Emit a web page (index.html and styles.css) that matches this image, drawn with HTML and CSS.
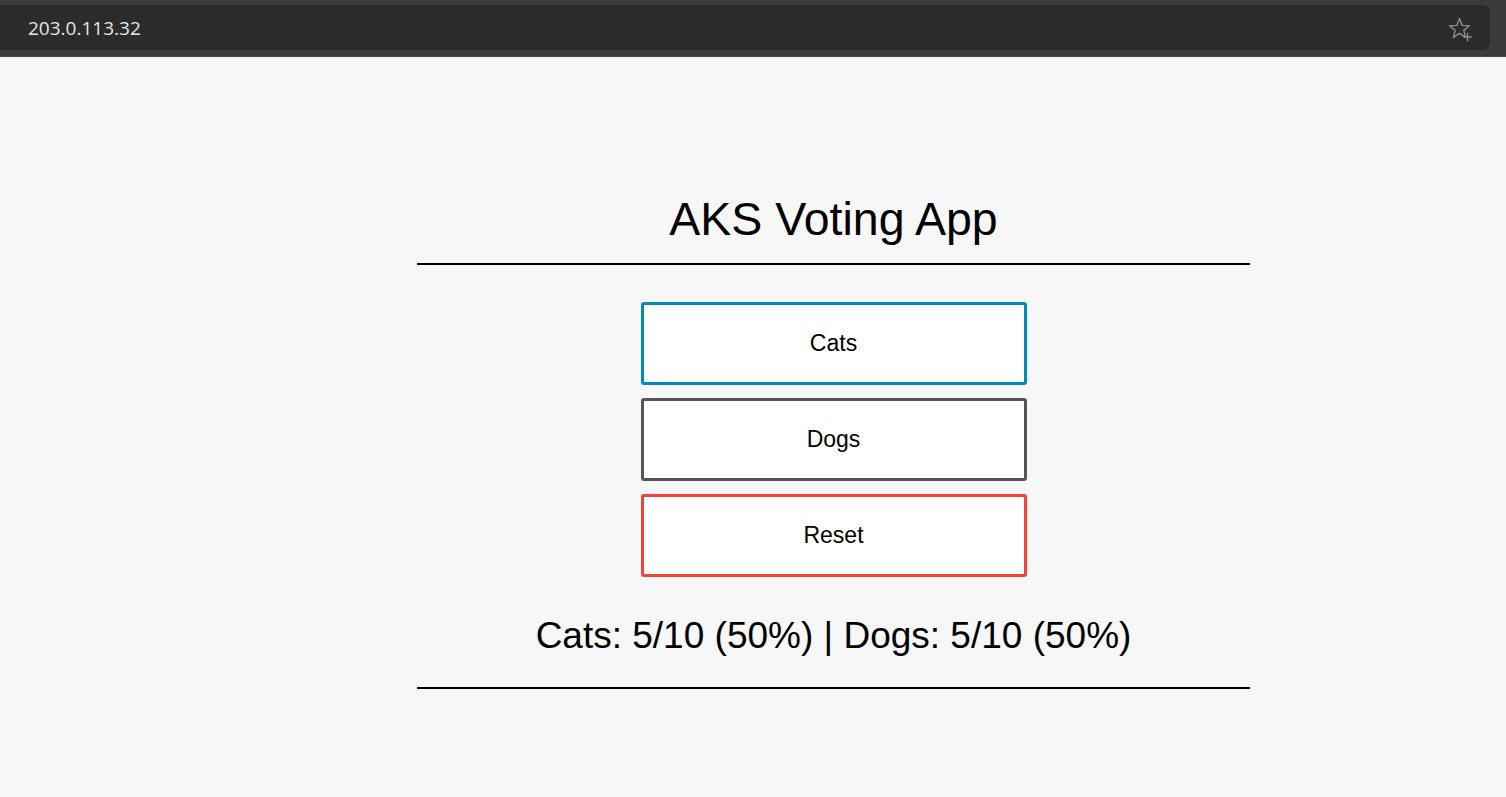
FILE: index.html
```html
<!DOCTYPE html>
<html lang="en">
<head>
<meta charset="utf-8">
<title>AKS Voting App</title>
<link rel="stylesheet" href="styles.css">
</head>
<body>
<header class="chrome">
  <div class="addressbar">
    <span class="url">203.0.113.32</span>
    <svg class="star" width="26" height="26" viewBox="0 0 26 26" fill="none" stroke="#8c8c8c" stroke-width="1.4" stroke-linejoin="round">
      <path d="M11.5 2.5 L14.2 9.4 L21.4 9.8 L15.8 14.4 L17.6 21.4 L11.5 17.4 L5.4 21.4 L7.2 14.4 L1.6 9.8 L8.8 9.4 Z"/>
      <path d="M19.5 17.5 V24.5 M16 21 H23" stroke-linecap="square"/>
    </svg>
  </div>
</header>
<main class="page">
  <div class="container">
    <h1 class="logo">AKS Voting App</h1>
    <div class="rule"></div>
    <form class="form">
      <button type="button" class="vote vote-cats">Cats</button>
      <button type="button" class="vote vote-dogs">Dogs</button>
      <button type="button" class="vote vote-reset">Reset</button>
    </form>
    <div class="results">Cats: 5/10 (50%) | Dogs: 5/10 (50%)</div>
    <div class="rule"></div>
  </div>
</main>
</body>
</html>
```
FILE: styles.css
```css
html, body {
  margin: 0;
  padding: 0;
}
body {
  background: #f7f7f7;
  font-family: "Liberation Sans", Arial, sans-serif;
  color: #000;
  height: 797px;
  overflow: hidden;
}
.chrome {
  background: #3b3b3b;
  height: 57px;
  padding-top: 5px;
  box-sizing: border-box;
  border-bottom: 1px solid #4a4a4a;
}
.addressbar {
  background: #2b2b2b;
  height: 45px;
  margin-right: 16px;
  border-radius: 0 8px 8px 0;
  display: flex;
  align-items: center;
  justify-content: space-between;
  padding: 0 16px 0 28px;
}
.url {
  font-family: "Open Sans", "Noto Sans", sans-serif;
  font-size: 19px;
  color: #e6e6e6;
}
.star {
  display: block;
  margin-top: 2px;
}
.page {
  padding-top: 136px;
}
.container {
  margin-left: 417px;
  width: 833px;
  display: flex;
  flex-direction: column;
  align-items: center;
}
.logo {
  margin: 0;
  font-weight: normal;
  font-size: 46.5px;
  line-height: 53px;
  text-align: center;
}
.rule {
  align-self: stretch;
  height: 2px;
  background: #000;
}
.logo + .rule {
  margin-top: 17px;
}
.form {
  margin: 37px 0 0;
  display: flex;
  flex-direction: column;
  gap: 13px;
  align-items: center;
}
.vote {
  width: 386px;
  height: 83px;
  background: #fff;
  border: 3px solid #555555;
  border-radius: 3px;
  font-family: "Liberation Sans", Arial, sans-serif;
  font-size: 23px;
  color: #000;
  padding: 0;
  cursor: pointer;
}
.vote-cats { border-color: #008cba; }
.vote-dogs { border-color: #555555; }
.vote-reset { border-color: #f44336; }
.results {
  margin-top: 37px;
  font-size: 37px;
  line-height: 43px;
  text-align: center;
  margin-bottom: 30px;
}
```
